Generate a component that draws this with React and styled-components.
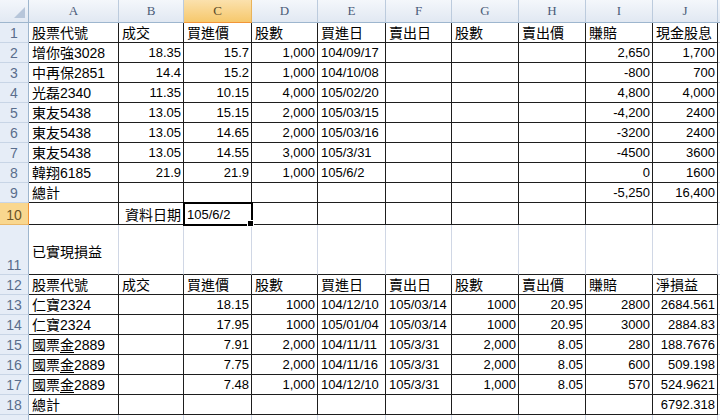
import React from 'react'
import styled, { createGlobalStyle } from 'styled-components'

const GlobalStyle = createGlobalStyle`
  html, body {
    margin: 0;
    padding: 0;
    background: #ffffff;
    overflow: hidden;
  }
`

const colWidths = [90, 65, 68, 66, 68, 66, 67, 67, 67, 65]
const letters = ['A', 'B', 'C', 'D', 'E', 'F', 'G', 'H', 'I', 'J', '']
const gridLine = '#d0d7e5'
const ruleLine = '#1e1e1e'

const Sheet = styled.div`
  display: grid;
  grid-template-columns: 29px ${colWidths.map(w => w + 'px').join(' ')} 1fr;
  grid-template-rows: 23px repeat(9, 20px) 22px 50px repeat(8, 20px);
  width: 720px;
  height: 420px;
  overflow: hidden;
  font-family: "Liberation Sans", "Noto Sans CJK TC", sans-serif;
  font-size: 14px;
  color: #000;
`

const Corner = styled.div`
  background: linear-gradient(#f3f6fb, #e2e9f3);
  border-right: 1px solid #9eb6ce;
  border-bottom: 1px solid #9eb6ce;
  display: flex;
  align-items: flex-end;
  justify-content: flex-end;
  padding: 0 3px 4px 0;
  box-sizing: border-box;
`

const ColHeader = styled.div`
  background: ${p => p.active
    ? 'linear-gradient(#fbe1ad, #f6c86c)'
    : 'linear-gradient(#f4f7fb, #e1e8f2)'};
  border-right: 1px solid ${p => p.active ? '#e9b35a' : '#bccbdd'};
  border-bottom: 1px solid ${p => p.active ? '#f29536' : '#9eb6ce'};
  box-sizing: border-box;
  display: flex;
  align-items: center;
  justify-content: center;
  font-family: "Liberation Serif", serif;
  font-size: 13px;
  color: ${p => p.active ? '#5b4a2a' : '#4a5b78'};
`

const RowHeader = styled.div`
  background: ${p => p.active ? '#f9d78f' : '#e6edf7'};
  border-right: 1px solid ${p => p.active ? '#f29536' : '#9eb6ce'};
  border-bottom: 1px solid ${p => p.active ? '#eab869' : '#c8d5e6'};
  box-sizing: border-box;
  display: flex;
  align-items: flex-end;
  justify-content: center;
  padding-bottom: 1px;
  font-size: 14px;
  color: ${p => p.active ? '#6a5428' : '#5a6d8c'};
`

const Cell = styled.div`
  position: relative;
  box-sizing: border-box;
  border-right: 1px solid ${p => p.vRule ? ruleLine : gridLine};
  border-bottom: 1px solid ${p => p.hRule ? ruleLine : gridLine};
  display: flex;
  align-items: ${p => p.middle ? 'center' : 'flex-end'};
  justify-content: ${p => p.right ? 'flex-end' : 'flex-start'};
  padding: ${p => p.middle ? '4px 2px 0 3px' : '0 2px 0 3px'};
  white-space: nowrap;
  line-height: 18px;
  font-size: ${p => p.narrow ? '13px' : '14px'};
  ${p => p.selected && `
    outline: 2px solid #000;
    outline-offset: -1px;
    z-index: 2;
    &::after {
      content: '';
      position: absolute;
      right: -3px;
      bottom: -3px;
      width: 5px;
      height: 5px;
      background: #000;
      border: 1px solid #fff;
    }
  `}
`

const Mark = styled.span`
  text-decoration: underline;
  text-underline-offset: 2px;
`

const header1 = ['股票代號', '成交', '買進價', '股數', '買進日', '賣出日', '股數', '賣出價', '賺賠', '現金股息']
const header2 = ['股票代號', '成交', '買進價', '股數', '買進日', '賣出日', '股數', '賣出價', '賺賠', '淨損益']

const rows = [
  { cells: header1, ruled: true },
  { cells: ['增你強3028', '18.35', '15.7', '1,000', '104/09/17', '', '', '', '2,650', '1,700'], ruled: true },
  { cells: ['中再保2851', '14.4', '15.2', '1,000', '104/10/08', '', '', '', '-800', '700'], ruled: true },
  { cells: ['光磊2340', '11.35', '10.15', '4,000', '105/02/20', '', '', '', '4,800', '4,000'], ruled: true },
  { cells: ['東友5438', '13.05', '15.15', '2,000', '105/03/15', '', '', '', '-4,200', '2400'], ruled: true },
  { cells: ['東友5438', '13.05', '14.65', '2,000', '105/03/16', '', '', '', '-3200', '2400'], ruled: true },
  { cells: ['東友5438', '13.05', '14.55', '3,000', '105/3/31', '', '', '', '-4500', '3600'], ruled: true },
  { cells: ['韓翔6185', '21.9', '21.9', '1,000', '105/6/2', '', '', '', '0', '1600'], ruled: true },
  { cells: ['總計', '', '', '', '', '', '', '', '-5,250', '16,400'], ruled: true },
  { cells: ['', '資料日期', '105/6/2', '', '', '', '', '', '', ''], ruled: true, active: true },
  { cells: ['已實現損益', '', '', '', '', '', '', '', '', ''], ruled: false, tall: true },
  { cells: header2, ruled: true },
  { cells: ['仁寶2324', '', '18.15', '1000', '104/12/10', '105/03/14', '1000', '20.95', '2800', '2684.561'], ruled: true },
  { cells: ['仁寶2324', '', '17.95', '1000', '105/01/04', '105/03/14', '1000', '20.95', '3000', '2884.83'], ruled: true },
  { cells: ['國票金2889', '', '7.91', '2,000', '104/11/11', '105/3/31', '2,000', '8.05', '280', '188.7676'], ruled: true },
  { cells: ['國票金2889', '', '7.75', '2,000', '104/11/16', '105/3/31', '2,000', '8.05', '600', '509.198'], ruled: true },
  { cells: ['國票金2889', '', '7.48', '1,000', '104/12/10', '105/3/31', '1,000', '8.05', '570', '524.9621'], ruled: true },
  { cells: ['總計', '', '', '', '', '', '', '', '', '6792.318'], ruled: true },
  { cells: ['', '', '', '', '', '', '', '', '', ''], ruled: false, hidden: true }
]

const isNumber = v => /^-?[\d,.]+$/.test(v)
const isLatin = v => v !== '' && /^[\d,./-]+$/.test(v)

function renderText (v) {
  // the 金 in 國票金 carries an underline in the sheet
  if (v.startsWith('國票金')) {
    return <span>國票<Mark>金</Mark>{v.slice(3)}</span>
  }
  return v
}

function CornerMark () {
  return (
    <svg width="11" height="11" viewBox="0 0 11 11">
      <polygon points="11,0 11,11 0,11" fill="#b7c6da" />
    </svg>
  )
}

export default function App () {
  return (
    <>
      <GlobalStyle />
      <Sheet>
        <Corner><CornerMark /></Corner>
        {letters.map((l, i) => (
          <ColHeader key={i} active={l === 'C'}>{l}</ColHeader>
        ))}
        {rows.map((row, r) => {
          const next = rows[r + 1]
          const bottomRuled = row.ruled || (next && next.ruled)
          return (
            <React.Fragment key={r}>
              <RowHeader active={row.active}>{row.hidden ? '' : r + 1}</RowHeader>
              {row.cells.map((v, c) => (
                <Cell
                  key={c}
                  vRule={row.ruled}
                  hRule={bottomRuled}
                  right={isNumber(v) || v === '資料日期'}
                  narrow={isLatin(v)}
                  middle={row.tall}
                  selected={row.active && c === 2}>
                  {renderText(v)}
                </Cell>
              ))}
              <Cell hRule={false} vRule={false} />
            </React.Fragment>
          )
        })}
      </Sheet>
    </>
  )
}
